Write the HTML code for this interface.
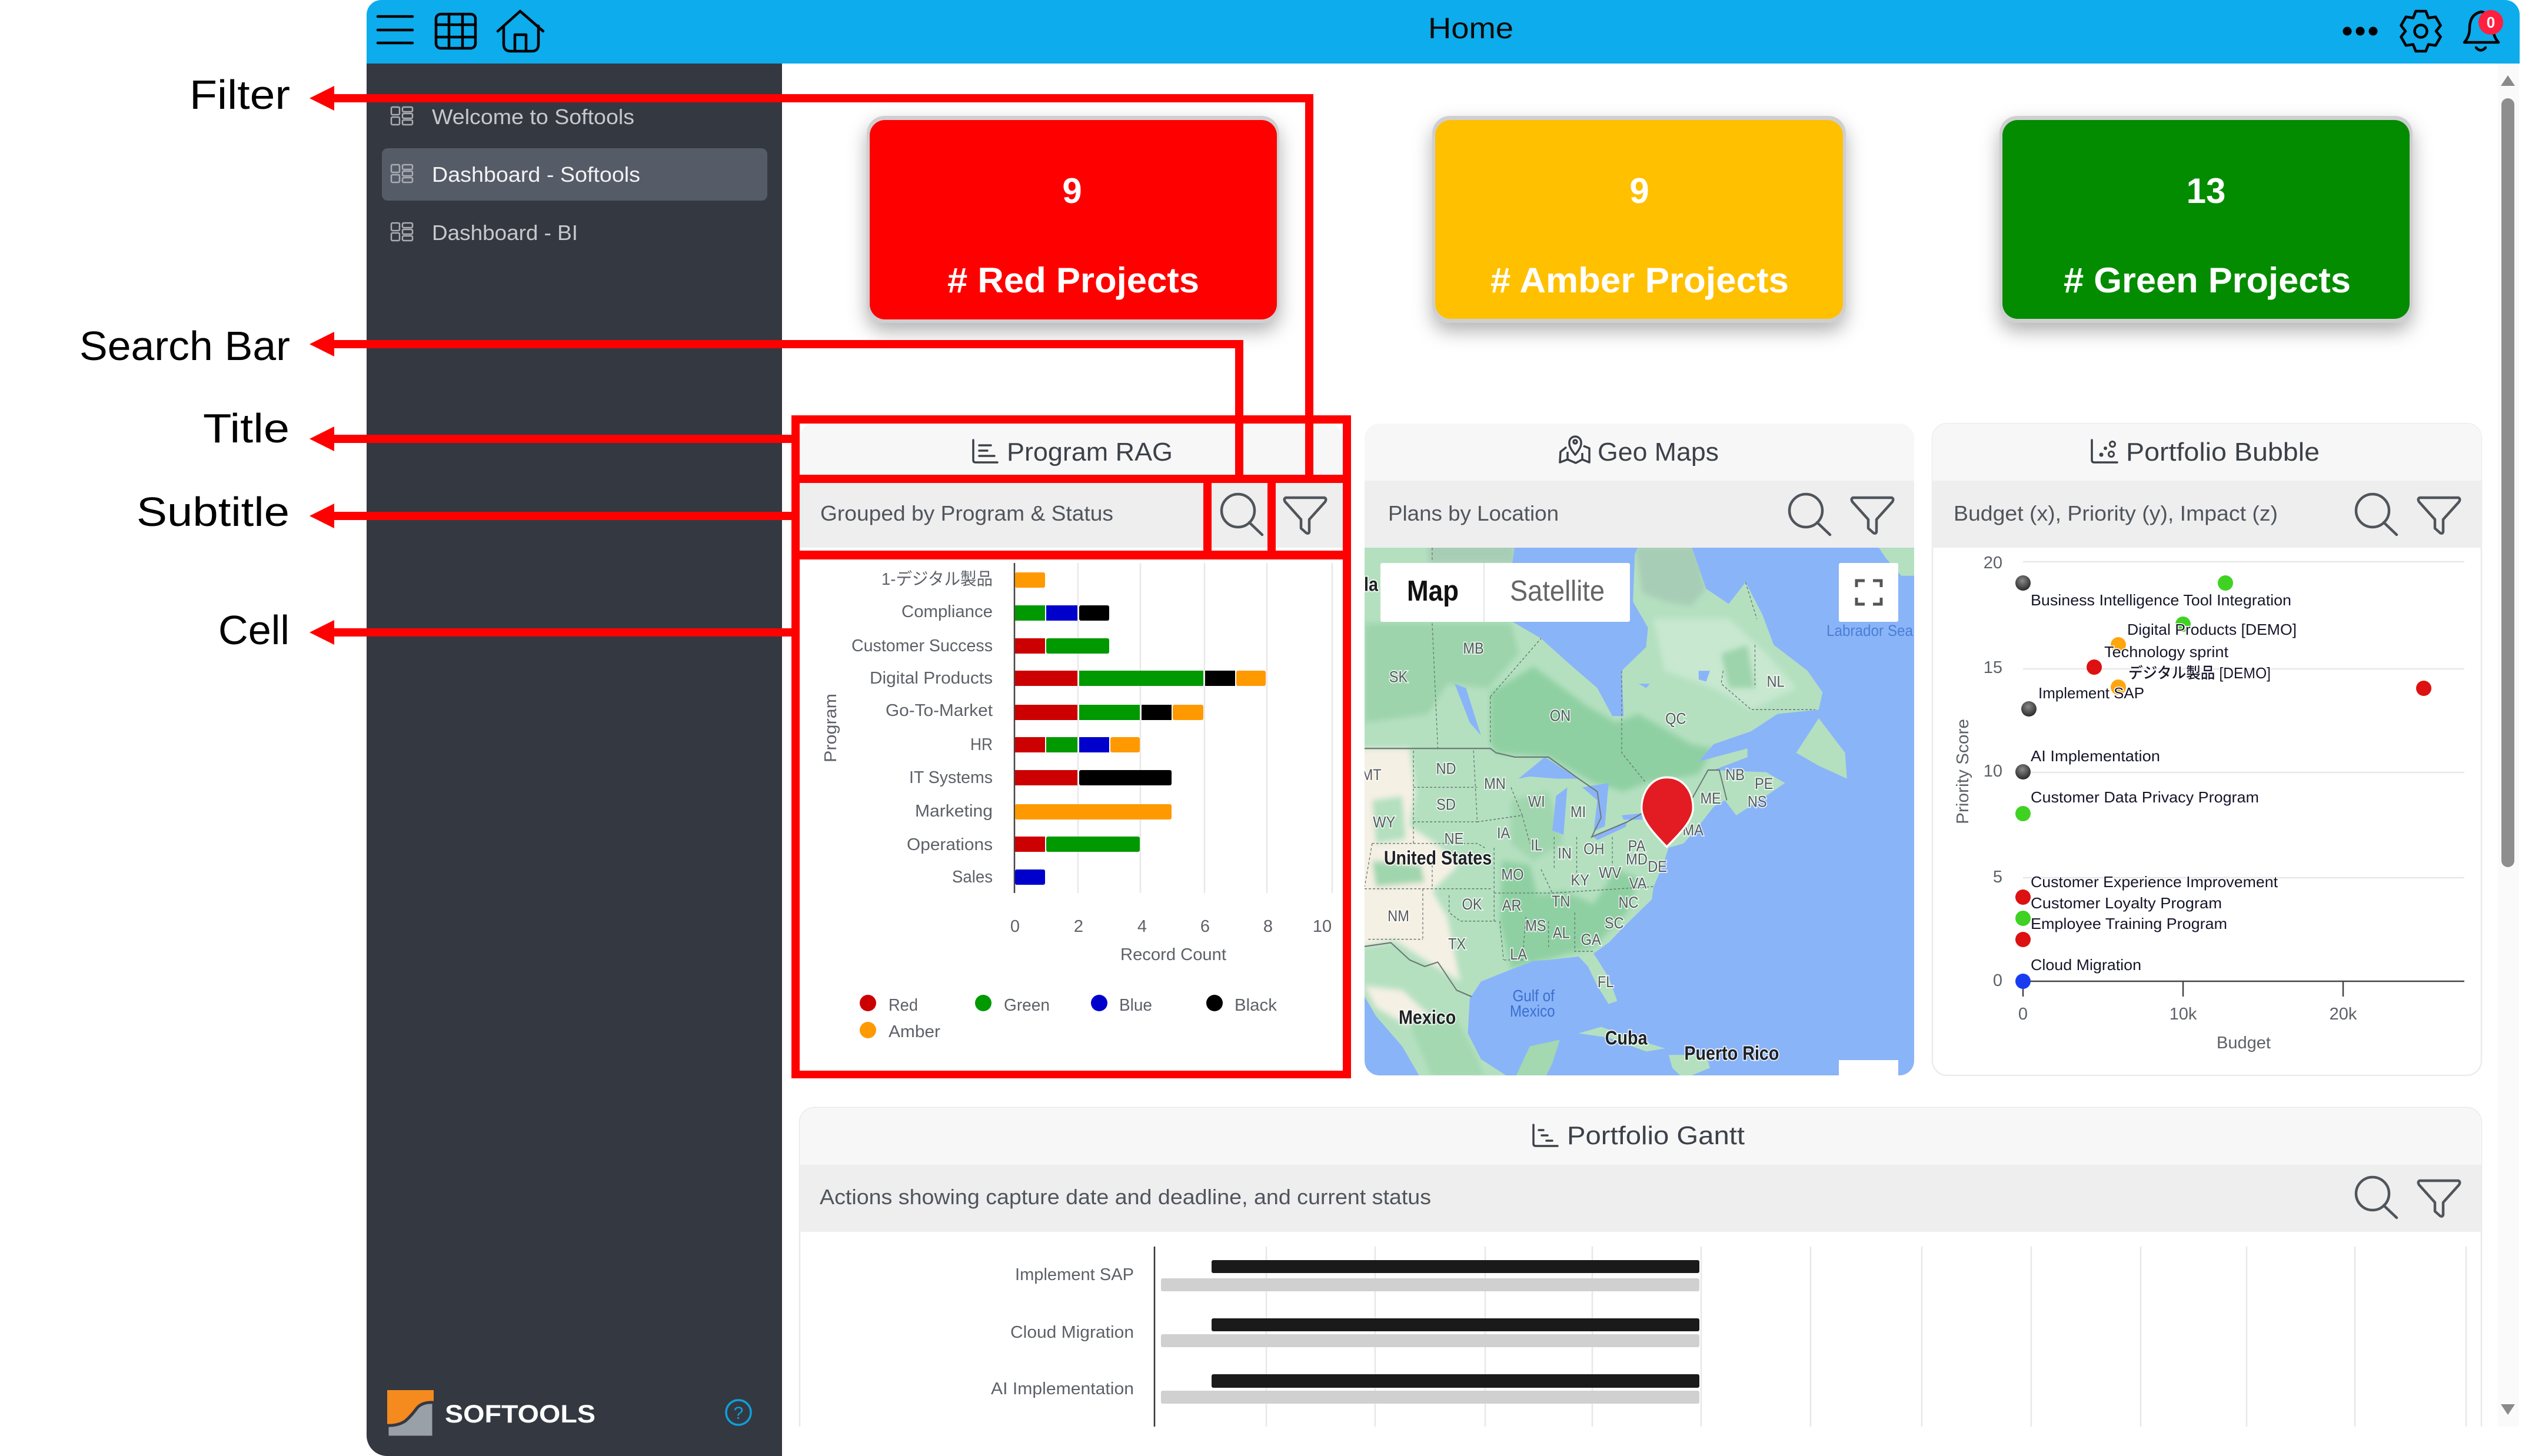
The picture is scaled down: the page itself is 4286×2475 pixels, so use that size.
<!DOCTYPE html>
<html lang="en">
<head>
<meta charset="utf-8">
<title>Softools Dashboard</title>
<style>
html,body{margin:0;padding:0;background:#fff;width:4286px;height:2475px;overflow:hidden}
svg{display:block}
text{font-family:"Liberation Sans","Noto Sans CJK JP",sans-serif}
.ann{font-size:70px;fill:#000}
.nav{font-size:36px}
.ct{font-size:44px;fill:#3c4149}
.cs{font-size:36px;fill:#50555c}
.lb{font-size:29px;fill:#5d6167}
.bl{font-size:26px;fill:#16162a;stroke:#fff;stroke-width:3px;paint-order:stroke;font-weight:500}
.kn{font-size:60px;font-weight:700;fill:#fff;text-anchor:middle}
.kt{font-size:60px;font-weight:700;fill:#fff}
.m{font-size:37px;fill:#555a5e;text-anchor:middle;stroke:#fff;stroke-width:5px;paint-order:stroke;stroke-opacity:.75}
.mb{font-size:45px;font-weight:700;fill:#202124;text-anchor:middle;stroke:#fff;stroke-width:5px;paint-order:stroke;stroke-opacity:.8}
</style>
</head>
<body>
<svg xmlns="http://www.w3.org/2000/svg" width="4286" height="2475" viewBox="0 0 4286 2475">
<defs>
<filter id="sh" x="-15%" y="-20%" width="130%" height="150%"><feDropShadow dx="0" dy="14" stdDeviation="16" flood-color="#000" flood-opacity=".3"/></filter>
<filter id="bl" x="-5%" y="-5%" width="110%" height="110%"><feGaussianBlur stdDeviation="7"/></filter>
<clipPath id="mapclip"><path d="M2319 931H3253V1803a25 25 0 0 1-25 25H2344a25 25 0 0 1-25-25Z"/></clipPath>
<clipPath id="mainclip"><rect x="1329" y="108" width="2953" height="2317"/></clipPath>
<path id="landp" d="M20 310H430L415 400L425 487L500 525L570 580L650 640L690 705L720 705L715 600L780 545L785 500L745 440L750 330L760 310H900L940 410L1000 445L1045 395L1090 470L1120 540L1210 600L1250 650L1240 690L1130 700L1060 740L960 770L920 810L1050 780L1050 800L960 830L1100 835L1150 860L1100 890L1020 935L990 900L960 915L920 960L880 1000L840 1010L825 1050L800 1100L795 1130L730 1185L680 1230L640 1255L680 1310L703 1365L680 1372L650 1330L625 1285L600 1262L520 1270L480 1272L420 1292L340 1320L310 1360L305 1440L340 1500L420 1545H180L130 1470L60 1400L20 1340Z"/>
<clipPath id="landc"><use href="#landp"/></clipPath>
<g id="mi" fill="none" stroke="#a9acb2" stroke-width="2.5">
<rect x="0" y="0" width="14" height="13" rx="2"/><rect x="0" y="17" width="14" height="13" rx="2"/>
<rect x="19" y="0" width="17" height="8" rx="2"/><rect x="19" y="11" width="17" height="8" rx="2"/><rect x="19" y="22" width="17" height="8" rx="2"/>
</g>
<g id="srch" fill="none" stroke="#50555c" stroke-width="4.5" stroke-linecap="round"><circle cx="0" cy="0" r="28"/><path d="M19 20L41 41"/></g>
<path id="fun" fill="none" stroke="#50555c" stroke-width="4.5" stroke-linejoin="round" d="M2 0H68Q72 2 69 7L42 37V58Q41 62 37 60L28 52V37L1 7Q-2 2 2 0Z"/>
<radialGradient id="bk" cx=".45" cy=".35" r=".7"><stop offset="0" stop-color="#8a8a8a"/><stop offset="1" stop-color="#222"/></radialGradient>
</defs>

<!-- app shell -->
<path d="M623 25a25 25 0 0 1 25-25H4257a25 25 0 0 1 25 25V2445a30 30 0 0 1-30 30H658a35 35 0 0 1-35-35Z" fill="#fff"/>
<path d="M623 25a25 25 0 0 1 25-25H4257a25 25 0 0 1 25 25V108H623Z" fill="#0dacec"/>
<path d="M623 108H1329V2475H658a35 35 0 0 1-35-35Z" fill="#343841"/>

<!-- top bar icons -->
<g fill="none" stroke="#000" stroke-width="4.5" stroke-linecap="round" stroke-linejoin="round">
<path d="M642 28H701M642 51H701M642 73H701"/>
<rect x="741" y="24" width="67" height="58" rx="8"/>
<path d="M763 24V82M786 24V82M741 42H808M741 63H808"/>
<path d="M846 53L884 19L923 53M856 44V75Q856 87 868 87H904Q915 87 915 75V44M875 87V59H894V87"/>
<path stroke-width="4.5" d="M4105.5 19H4122.5L4127 30.500L4139.200 28.700L4147.600 43.400L4140 53L4147.600 62.600L4139.200 77.300L4127 75.500L4122.500 87H4105.500L4101 75.500L4088.800 77.300L4080.400 62.600L4088 53L4080.400 43.400L4088.800 28.700L4101 30.500Z"/>
<circle cx="4114" cy="53" r="10.500"/>
<path d="M4188 72Q4197 62 4197 48Q4197 24 4217 20Q4236 24 4237 48Q4237 62 4246 72Z"/>
<path d="M4208 81Q4216 90 4224 81"/>
</g>
<g fill="#000"><circle cx="3989" cy="53" r="7.500"/><circle cx="4011" cy="53" r="7.500"/><circle cx="4033" cy="53" r="7.500"/></g>
<circle cx="4233" cy="38" r="21" fill="#ff2040"/>
<text x="4233" y="47" font-size="26" font-weight="700" fill="#fff" text-anchor="middle">0</text>
<text x="2427" y="65" font-size="50" fill="#0b0b0b" textLength="145" lengthAdjust="spacingAndGlyphs">Home</text>

<!-- sidebar -->
<rect x="649" y="252" width="655" height="89" rx="10" fill="#555b67"/>
<use href="#mi" x="665" y="182"/>
<use href="#mi" x="665" y="280"/>
<use href="#mi" x="665" y="379"/>
<text class="nav" x="734" y="211" fill="#c6c8cc" textLength="344" lengthAdjust="spacingAndGlyphs">Welcome to Softools</text>
<text class="nav" x="734" y="309" fill="#f2f2f3" textLength="354" lengthAdjust="spacingAndGlyphs">Dashboard - Softools</text>
<text class="nav" x="734" y="408" fill="#c6c8cc" textLength="248" lengthAdjust="spacingAndGlyphs">Dashboard - BI</text>
<rect x="658" y="2363" width="79" height="80" fill="#f58a1f"/>
<path d="M658 2423Q675 2424 688 2416Q698 2408 709 2393Q718 2383 737 2384V2443H658Z" fill="#9aa0a8" stroke="#343841" stroke-width="5"/>
<text x="756" y="2418" font-size="43" font-weight="700" fill="#fff" textLength="256" lengthAdjust="spacingAndGlyphs">SOFTOOLS</text>
<circle cx="1255" cy="2401" r="21" fill="none" stroke="#0f9fdc" stroke-width="3.500"/>
<text x="1255" y="2412" font-size="30" fill="#0f9fdc" text-anchor="middle">?</text>

<!-- scrollbar -->
<rect x="4245" y="108" width="36" height="2317" fill="#fafafa"/>
<path d="M4262 128L4274 146H4250Z" fill="#8a8a8a"/>
<rect x="4251" y="167" width="22" height="1307" rx="11" fill="#8e8e8e"/>
<path d="M4250 2387H4274L4262 2405Z" fill="#8a8a8a"/>

<!-- KPI cards -->
<rect x="1473" y="197" width="701" height="352" rx="30" fill="#cfcfd2" filter="url(#sh)"/>
<rect x="1478" y="204" width="692" height="339" rx="26" fill="#ff0000"/>
<rect x="2434" y="197" width="703" height="352" rx="30" fill="#cfcfd2" filter="url(#sh)"/>
<rect x="2439" y="204" width="693" height="338" rx="26" fill="#ffc000"/>
<rect x="3398" y="197" width="702" height="352" rx="30" fill="#cfcfd2" filter="url(#sh)"/>
<rect x="3403" y="204" width="692" height="338" rx="26" fill="#048c00"/>
<text class="kn" x="1822" y="345">9</text>
<text class="kt" x="1610" y="497" textLength="428" lengthAdjust="spacingAndGlyphs"># Red Projects</text>
<text class="kn" x="2786" y="345">9</text>
<text class="kt" x="2533" y="497" textLength="507" lengthAdjust="spacingAndGlyphs"># Amber Projects</text>
<text class="kn" x="3749" y="345">13</text>
<text class="kt" x="3507" y="497" textLength="488" lengthAdjust="spacingAndGlyphs"># Green Projects</text>

<!-- Program RAG card -->
<path d="M1359 745a25 25 0 0 1 25-25H2257a25 25 0 0 1 25 25V817H1359Z" fill="#f7f7f7"/>
<rect x="1359" y="817" width="923" height="114" fill="#eeeeee"/>
<g fill="none" stroke="#3c4149" stroke-width="3.500" stroke-linecap="round"><path d="M1654 748V782Q1654 786 1658 786H1695"/><path d="M1664 757H1684M1664 766H1678M1664 775H1690"/></g>
<text class="ct" x="1711" y="783" textLength="282" lengthAdjust="spacingAndGlyphs">Program RAG</text>
<text class="cs" x="1394" y="885" textLength="498" lengthAdjust="spacingAndGlyphs">Grouped by Program &amp; Status</text>
<use href="#srch" x="2104" y="868"/>
<use href="#fun" x="2183" y="846"/>

<!-- RAG chart -->
<g stroke="#e8e8e8" stroke-width="2.500"><path d="M1832 957V1518M1938 957V1518M2047 957V1518M2153 957V1518M2264 957V1518"/></g>
<path d="M1724 957V1518" stroke="#444" stroke-width="2.500"/>
<g>
<rect x="1725" y="973" width="51" height="26" rx="3" fill="#ff9900"/>
<rect x="1725" y="1029" width="51" height="26" fill="#009900"/><rect x="1778" y="1029" width="53" height="26" fill="#0000cc"/><rect x="1834" y="1029" width="51" height="26" rx="3" fill="#000"/>
<rect x="1725" y="1085" width="51" height="26" fill="#cc0000"/><rect x="1778" y="1085" width="107" height="26" rx="3" fill="#009900"/>
<rect x="1725" y="1140" width="106" height="26" fill="#cc0000"/><rect x="1834" y="1140" width="211" height="26" fill="#009900"/><rect x="2048" y="1140" width="51" height="26" fill="#000"/><rect x="2101" y="1140" width="50" height="26" rx="3" fill="#ff9900"/>
<rect x="1725" y="1198" width="106" height="26" fill="#cc0000"/><rect x="1834" y="1198" width="103" height="26" fill="#009900"/><rect x="1940" y="1198" width="51" height="26" fill="#000"/><rect x="1993" y="1198" width="52" height="26" rx="3" fill="#ff9900"/>
<rect x="1725" y="1253" width="51" height="26" fill="#cc0000"/><rect x="1778" y="1253" width="53" height="26" fill="#009900"/><rect x="1834" y="1253" width="51" height="26" fill="#0000cc"/><rect x="1887" y="1253" width="50" height="26" rx="3" fill="#ff9900"/>
<rect x="1725" y="1309" width="106" height="26" fill="#cc0000"/><rect x="1834" y="1309" width="157" height="26" rx="3" fill="#000"/>
<rect x="1725" y="1367" width="266" height="26" rx="3" fill="#ff9900"/>
<rect x="1725" y="1422" width="51" height="26" fill="#cc0000"/><rect x="1778" y="1422" width="159" height="26" rx="3" fill="#009900"/>
<rect x="1725" y="1478" width="51" height="26" rx="3" fill="#0000cc"/>
</g>
<text class="lb" x="1498" y="994" textLength="189" lengthAdjust="spacingAndGlyphs">1-デジタル製品</text>
<text class="lb" x="1532" y="1049" textLength="155" lengthAdjust="spacingAndGlyphs">Compliance</text>
<text class="lb" x="1447" y="1107" textLength="240" lengthAdjust="spacingAndGlyphs">Customer Success</text>
<text class="lb" x="1478" y="1162" textLength="209" lengthAdjust="spacingAndGlyphs">Digital Products</text>
<text class="lb" x="1505" y="1217" textLength="182" lengthAdjust="spacingAndGlyphs">Go-To-Market</text>
<text class="lb" x="1649" y="1275" textLength="38" lengthAdjust="spacingAndGlyphs">HR</text>
<text class="lb" x="1545" y="1331" textLength="142" lengthAdjust="spacingAndGlyphs">IT Systems</text>
<text class="lb" x="1555" y="1388" textLength="132" lengthAdjust="spacingAndGlyphs">Marketing</text>
<text class="lb" x="1541" y="1445" textLength="146" lengthAdjust="spacingAndGlyphs">Operations</text>
<text class="lb" x="1618" y="1500" textLength="69" lengthAdjust="spacingAndGlyphs">Sales</text>
<text class="lb" transform="translate(1421 1296) rotate(-90)" textLength="117" lengthAdjust="spacingAndGlyphs">Program</text>
<g text-anchor="middle"><text class="lb" x="1725" y="1584">0</text><text class="lb" x="1833" y="1584">2</text><text class="lb" x="1941" y="1584">4</text><text class="lb" x="2048" y="1584">6</text><text class="lb" x="2155" y="1584">8</text><text class="lb" x="2247" y="1584">10</text></g>
<text class="lb" x="1904" y="1632" textLength="180" lengthAdjust="spacingAndGlyphs">Record Count</text>
<circle cx="1475" cy="1705" r="14" fill="#cc0000"/><circle cx="1671" cy="1705" r="14" fill="#009900"/><circle cx="1868" cy="1705" r="14" fill="#0000cc"/><circle cx="2064" cy="1705" r="14" fill="#000"/><circle cx="1475" cy="1751" r="14" fill="#ff9900"/>
<text class="lb" x="1510" y="1718" textLength="50" lengthAdjust="spacingAndGlyphs">Red</text>
<text class="lb" x="1706" y="1718" textLength="78" lengthAdjust="spacingAndGlyphs">Green</text>
<text class="lb" x="1902" y="1718" textLength="56" lengthAdjust="spacingAndGlyphs">Blue</text>
<text class="lb" x="2098" y="1718" textLength="72" lengthAdjust="spacingAndGlyphs">Black</text>
<text class="lb" x="1510" y="1763" textLength="88" lengthAdjust="spacingAndGlyphs">Amber</text>

<!-- Geo Maps card -->
<path d="M2319 745a25 25 0 0 1 25-25H3228a25 25 0 0 1 25 25V817H2319Z" fill="#f7f7f7"/>
<rect x="2319" y="817" width="934" height="114" fill="#eeeeee"/>
<g fill="none" stroke="#3c4149" stroke-width="3.500" stroke-linejoin="round"><path d="M2662 760L2652 768L2651 786L2664 781L2678 787L2689 781L2701 786V762L2691 758"/><path d="M2677 773Q2666 760 2667 752A10 10 0 1 1 2687 752Q2688 760 2677 773Z"/><circle cx="2677" cy="751" r="3"/><path d="M2664 781V768M2689 781V770"/></g>
<text class="ct" x="2715" y="783" textLength="206" lengthAdjust="spacingAndGlyphs">Geo Maps</text>
<text class="cs" x="2359" y="885" textLength="290" lengthAdjust="spacingAndGlyphs">Plans by Location</text>
<use href="#srch" x="3069" y="868"/>
<use href="#fun" x="3147" y="846"/>

<!-- Map -->
<g clip-path="url(#mapclip)">
<rect x="2319" y="931" width="934" height="897" fill="#8ab4f8"/>
<g transform="translate(2300 700) scale(.6378 .7337)">
<use href="#landp" fill="#b4e0c0"/>
<path fill="#b4e0c0" d="M1180 790L1240 710L1310 790L1315 850L1240 820Z"/>
<path fill="#b4e0c0" d="M1400 315H1500V380H1460L1420 340Z"/>
<path fill="#b4e0c0" d="M600 1440L660 1425L740 1450L830 1475L780 1482L680 1450Z"/>
<path fill="#b4e0c0" d="M840 1490L940 1490L950 1520L880 1545L850 1520Z"/>
<path fill="#a3d8b0" d="M430 1545L470 1470L550 1455L530 1510L510 1545Z"/>
<g clip-path="url(#landc)">
<g filter="url(#bl)">
<path fill="#a8cdb6" d="M750 310H910L940 410L900 450L830 440L770 420Z"/>
<path fill="#a8cdb6" d="M200 300H430V350H200Z"/>
<path fill="#9dd4ac" d="M30 490H420L440 560L360 640L250 630L200 700L30 720Z"/>
<path fill="#8fd0a2" d="M365 650L480 590L620 680L700 720L760 700L900 770L960 780L920 840L780 860L720 880L640 860L520 800L380 790L365 770Z"/>
<path fill="#c8e8d0" d="M800 480H1000L1100 560L1180 640L1060 690L960 640L830 600Z"/>
<path fill="#9dd4ac" d="M980 560L1050 540L1070 640L1000 640Z"/>
<path fill="#a0d6ae" d="M420 900L520 880L560 1000L480 1040L420 1000Z"/>
<path fill="#8fd0a2" d="M395 1040L470 1050L490 1120L560 1110L640 1140L700 1060L760 1080L730 1160L640 1240L520 1268L420 1290L390 1180Z"/>
<path fill="#f5f0e4" d="M20 780H150L165 880L150 960L220 1000L280 1050L210 1110L250 1170L285 1320L200 1275L110 1225L20 1240Z"/>
<path fill="#f5f0e4" d="M30 1330L130 1340L230 1420L240 1460L140 1420L60 1380Z"/>
<path fill="#b4e0c0" d="M50 900L130 890L140 990L60 1000Z"/>
<path fill="#a0d6ae" d="M50 1040L180 1050L190 1090L60 1100Z"/>
<path fill="#a3d8b0" d="M140 1400L270 1400L320 1480L350 1540L210 1540Z"/>
</g>
</g>
<g fill="#8ab4f8">
<path d="M440 850L510 800L600 850L540 850L470 845Z"/>
<path d="M540 890L570 870L560 980L530 970Z"/>
<path d="M610 870L680 860L670 960L640 972L650 900Z"/>
<path d="M640 985L730 950L725 962L650 992Z"/>
<path d="M715 935L770 930L770 945L720 945Z"/>
<path d="M270 630L300 640L340 750L310 720Z"/>
<path d="M920 600L950 600L940 625L920 620ZM760 630L790 630L780 640ZM1060 750L1110 770L1100 780Z"/>
</g>
<g fill="none" stroke="#66756f" stroke-width="2" stroke-dasharray="6 5">
<path d="M210 315V345M210 490L225 780M365 660V770M365 660L500 525M715 600L715 790L780 860M985 600L980 630L1060 690L1230 690M1070 540L1070 640M1045 395L1075 480"/>
<path d="M160 785V1000M160 870L330 870M320 785L330 950L450 935L470 1000M160 950H335M50 1000H330L350 1010M420 870L450 935M50 1000L30 1100M30 1105H370M185 1105V1220M40 1222H185M375 1010V1180M375 1115H530L800 1100M255 1120L255 1160L285 1180H380M390 1180L400 1270M460 1170L450 1270L400 1270M520 1180V1240M590 1160V1250L640 1250M535 985V1060M595 985V1070M690 985V1060M500 1060L530 1115M210 1050V1100"/>
</g>
<g fill="none" stroke="#6d7876" stroke-width="3">
<path d="M20 780H365L380 790L430 800L520 800L600 850L650 880L660 940L635 985L730 950L770 930L800 900L900 900L945 830L975 830L995 900"/>
<path d="M20 1240L100 1230L150 1270L190 1285L225 1275L275 1340L315 1355"/>
</g>
<g>
<text class="m" x="320" y="560">MB</text><text class="m" x="120" y="626">SK</text><text class="m" x="551" y="716">ON</text><text class="m" x="859" y="723">QC</text><text class="m" x="1125" y="637">NL</text>
<text class="m" x="247" y="839">ND</text><text class="m" x="377" y="874">MN</text><text class="m" x="1017" y="853">NB</text><text class="m" x="1094" y="874">PE</text><text class="m" x="952" y="908">ME</text><text class="m" x="1076" y="915">NS</text><text class="m" x="48" y="853">MT</text>
<text class="m" x="247" y="922">SD</text><text class="m" x="488" y="915">WI</text><text class="m" x="599" y="939">MI</text><text class="m" x="82" y="963">WY</text><text class="m" x="400" y="988">IA</text><text class="m" x="268" y="1001">NE</text><text class="m" x="488" y="1016">IL</text><text class="m" x="563" y="1035">IN</text><text class="m" x="641" y="1025">OH</text><text class="m" x="755" y="1018">PA</text><text class="m" x="905" y="981">MA</text><text class="m" x="755" y="1049">MD</text><text class="m" x="810" y="1066">DE</text><text class="m" x="424" y="1084">MO</text><text class="m" x="604" y="1097">KY</text><text class="m" x="684" y="1080">WV</text><text class="m" x="758" y="1105">VA</text><text class="m" x="316" y="1153">OK</text><text class="m" x="422" y="1156">AR</text><text class="m" x="553" y="1146">TN</text><text class="m" x="733" y="1149">NC</text><text class="m" x="120" y="1180">NM</text><text class="m" x="486" y="1203">MS</text><text class="m" x="554" y="1219">AL</text><text class="m" x="695" y="1197">SC</text><text class="m" x="633" y="1235">GA</text><text class="m" x="276" y="1245">TX</text><text class="m" x="440" y="1269">LA</text><text class="m" x="672" y="1333">FL</text>
<text class="mb" x="225" y="1049">United States</text><text class="mb" x="197" y="1418">Mexico</text><text class="mb" x="727" y="1466">Cuba</text><text class="mb" x="1008" y="1501">Puerto Rico</text><text class="mb" x="47" y="415">la</text>
<text x="480" y="1366" font-size="38" fill="#3a6fd0" text-anchor="middle">Gulf of</text><text x="477" y="1401" font-size="38" fill="#3a6fd0" text-anchor="middle">Mexico</text>
</g>
<path d="M835 847C880 847 905 880 905 918C905 950 860 985 835 1008C810 985 768 950 768 918C768 880 795 847 835 847Z" fill="#e31b23" stroke="#fff" stroke-width="5"/>
</g>
<rect x="2346" y="957" width="424" height="100" rx="3" fill="#fff"/>
<rect x="2521" y="957" width="2" height="100" fill="#e6e6e6"/>
<text x="2391" y="1021" font-size="49" font-weight="700" fill="#111" textLength="88" lengthAdjust="spacingAndGlyphs">Map</text>
<text x="2566" y="1021" font-size="49" fill="#666" textLength="161" lengthAdjust="spacingAndGlyphs">Satellite</text>
<rect x="3125" y="957" width="101" height="100" rx="3" fill="#fff"/>
<path d="M3155 998V987H3169M3183 987H3197V998M3197 1016V1027H3183M3169 1027H3155V1016" fill="none" stroke="#555" stroke-width="5"/>
<text x="3104" y="1081" font-size="27" fill="#4a7fd6" textLength="147" lengthAdjust="spacingAndGlyphs">Labrador Sea</text>
<rect x="3125" y="1802" width="101" height="30" fill="#fff"/>
</g>

<!-- Portfolio Bubble card -->
<path d="M3284 745a25 25 0 0 1 25-25H4192a25 25 0 0 1 25 25V1803a25 25 0 0 1-25 25H3309a25 25 0 0 1-25-25Z" fill="#fff" stroke="#ececec" stroke-width="2.500"/>
<path d="M3284 745a25 25 0 0 1 25-25H4192a25 25 0 0 1 25 25V817H3284Z" fill="#f7f7f7"/>
<rect x="3284" y="817" width="933" height="114" fill="#eeeeee"/>
<g fill="none" stroke="#3c4149" stroke-width="3.500" stroke-linecap="round"><path d="M3555 748V782Q3555 786 3559 786H3598"/></g>
<g fill="#3c4149"><circle cx="3571" cy="773" r="3.500"/><circle cx="3578" cy="762" r="3"/></g>
<g fill="none" stroke="#3c4149" stroke-width="3"><circle cx="3590" cy="755" r="4.500"/><circle cx="3588" cy="772" r="4.500"/></g>
<text class="ct" x="3613" y="783" textLength="329" lengthAdjust="spacingAndGlyphs">Portfolio Bubble</text>
<text class="cs" x="3320" y="885" textLength="551" lengthAdjust="spacingAndGlyphs">Budget (x), Priority (y), Impact (z)</text>
<use href="#srch" x="4032" y="868"/>
<use href="#fun" x="4110" y="846"/>
<g stroke="#e8e8e8" stroke-width="2.500"><path d="M3438 955H4188M3438 1137H4188M3438 1313H4188M3438 1492H4188"/></g>
<path d="M3438 1668H4188M3438 1668V1694M3710 1668V1694M3982 1668V1694" stroke="#444" stroke-width="2.500" fill="none"/>
<g text-anchor="end"><text class="lb" x="3403" y="966">20</text><text class="lb" x="3403" y="1144">15</text><text class="lb" x="3403" y="1320">10</text><text class="lb" x="3403" y="1500">5</text><text class="lb" x="3403" y="1676">0</text></g>
<g text-anchor="middle"><text class="lb" x="3438" y="1733">0</text><text class="lb" x="3710" y="1733">10k</text><text class="lb" x="3982" y="1733">20k</text><text class="lb" x="3813" y="1782">Budget</text></g>
<text class="lb" transform="translate(3345 1401) rotate(-90)" textLength="179" lengthAdjust="spacingAndGlyphs">Priority Score</text>
<g>
<circle cx="3438" cy="991" r="13" fill="url(#bk)"/>
<circle cx="3782" cy="991" r="13" fill="#3fd222"/>
<circle cx="3710" cy="1061" r="13" fill="#3fd222"/>
<circle cx="3600" cy="1096" r="13" fill="#ffa60d"/>
<circle cx="3559" cy="1134" r="13" fill="#dd1111"/>
<circle cx="3600" cy="1168" r="13" fill="#ffa60d"/>
<circle cx="4119" cy="1170" r="13" fill="#dd1111"/>
<circle cx="3448" cy="1205" r="13" fill="url(#bk)"/>
<circle cx="3438" cy="1312" r="13" fill="url(#bk)"/>
<circle cx="3438" cy="1383" r="13" fill="#3fd222"/>
<circle cx="3438" cy="1525" r="13" fill="#dd1111"/>
<circle cx="3438" cy="1561" r="13" fill="#3fd222"/>
<circle cx="3438" cy="1597" r="13" fill="#dd1111"/>
<circle cx="3438" cy="1668" r="13" fill="#1a3cf0"/>
</g>
<text class="bl" x="3451" y="1029" textLength="443" lengthAdjust="spacingAndGlyphs">Business Intelligence Tool Integration</text>
<text class="bl" x="3615" y="1079" textLength="288" lengthAdjust="spacingAndGlyphs">Digital Products [DEMO]</text>
<text class="bl" x="3576" y="1117" textLength="211" lengthAdjust="spacingAndGlyphs">Technology sprint</text>
<text class="bl" x="3617" y="1153" textLength="242" lengthAdjust="spacingAndGlyphs">デジタル製品 [DEMO]</text>
<text class="bl" x="3464" y="1187" textLength="180" lengthAdjust="spacingAndGlyphs">Implement SAP</text>
<text class="bl" x="3451" y="1294" textLength="220" lengthAdjust="spacingAndGlyphs">AI Implementation</text>
<text class="bl" x="3451" y="1364" textLength="388" lengthAdjust="spacingAndGlyphs">Customer Data Privacy Program</text>
<text class="bl" x="3451" y="1508" textLength="420" lengthAdjust="spacingAndGlyphs">Customer Experience Improvement</text>
<text class="bl" x="3451" y="1544" textLength="325" lengthAdjust="spacingAndGlyphs">Customer Loyalty Program</text>
<text class="bl" x="3451" y="1579" textLength="334" lengthAdjust="spacingAndGlyphs">Employee Training Program</text>
<text class="bl" x="3451" y="1649" textLength="188" lengthAdjust="spacingAndGlyphs">Cloud Migration</text>

<!-- Portfolio Gantt card -->
<g clip-path="url(#mainclip)">
<path d="M1359 1908a25 25 0 0 1 25-25H4192a25 25 0 0 1 25 25V2470H1359Z" fill="#fff" stroke="#e8e8e8" stroke-width="2.500"/>
<path d="M1359 1908a25 25 0 0 1 25-25H4192a25 25 0 0 1 25 25V1980H1359Z" fill="#f7f7f7"/>
<rect x="1359" y="1980" width="2858" height="114" fill="#eeeeee"/>
<g fill="none" stroke="#3c4149" stroke-width="3.500" stroke-linecap="round"><path d="M2606 1912V1944Q2606 1948 2610 1948H2647"/><path d="M2615 1921H2623M2620 1930H2630M2628 1939H2638"/></g>
<text class="ct" x="2663" y="1945" textLength="302" lengthAdjust="spacingAndGlyphs">Portfolio Gantt</text>
<text class="cs" x="1393" y="2047" textLength="1039" lengthAdjust="spacingAndGlyphs">Actions showing capture date and deadline, and current status</text>
<use href="#srch" x="4032" y="2029"/>
<use href="#fun" x="4110" y="2007"/>
<g stroke="#e8e8e8" stroke-width="2.500"><path d="M2152 2119V2425M2337 2119V2425M2524 2119V2425M2706 2119V2425M2891 2119V2425M3077 2119V2425M3266 2119V2425M3452 2119V2425M3638 2119V2425M3818 2119V2425M4002 2119V2425M4191 2119V2425"/></g>
<rect x="2059" y="2142" width="829" height="22" rx="3" fill="#1a1a1a"/>
<rect x="2059" y="2241" width="829" height="22" rx="3" fill="#1a1a1a"/>
<rect x="2059" y="2336" width="829" height="23" rx="3" fill="#1a1a1a"/>
<rect x="1973" y="2173" width="915" height="22" rx="3" fill="#d0d0d0"/>
<rect x="1973" y="2268" width="915" height="22" rx="3" fill="#d0d0d0"/>
<rect x="1973" y="2364" width="915" height="22" rx="3" fill="#d0d0d0"/>
<path d="M1962 2119V2425" stroke="#333" stroke-width="2.500"/>
<text class="lb" x="1725" y="2176" textLength="202" lengthAdjust="spacingAndGlyphs">Implement SAP</text>
<text class="lb" x="1717" y="2274" textLength="210" lengthAdjust="spacingAndGlyphs">Cloud Migration</text>
<text class="lb" x="1684" y="2370" textLength="243" lengthAdjust="spacingAndGlyphs">AI Implementation</text>
</g>

<!-- Annotation overlays -->
<g fill="#ff0000">
<path d="M526 167L568 146V160H2232V821H2218V174H568V188Z"/>
<path d="M526 585L568 564V578H2113V821H2099V592H568V606Z"/>
<path d="M526 746L568 725V739H1345V753H568V767Z"/>
<path d="M526 877L568 856V870H1345V884H568V898Z"/>
<path d="M526 1075L568 1054V1068H1345V1082H568V1096Z"/>
<rect x="1345" y="706" width="951" height="14"/>
<rect x="1345" y="807" width="951" height="14"/>
<rect x="1345" y="936" width="951" height="15"/>
<rect x="1345" y="1820" width="951" height="13"/>
<rect x="1345" y="706" width="14" height="1127"/>
<rect x="2282" y="706" width="14" height="1127"/>
<rect x="2045" y="821" width="14" height="115"/>
<rect x="2154" y="821" width="14" height="115"/>
</g>
<text class="ann" x="322" y="185" textLength="171" lengthAdjust="spacingAndGlyphs">Filter</text>
<text class="ann" x="135" y="612" textLength="358" lengthAdjust="spacingAndGlyphs">Search Bar</text>
<text class="ann" x="345" y="752" textLength="147" lengthAdjust="spacingAndGlyphs">Title</text>
<text class="ann" x="232" y="894" textLength="260" lengthAdjust="spacingAndGlyphs">Subtitle</text>
<text class="ann" x="371" y="1095" textLength="121" lengthAdjust="spacingAndGlyphs">Cell</text>
</svg>
</body>
</html>
